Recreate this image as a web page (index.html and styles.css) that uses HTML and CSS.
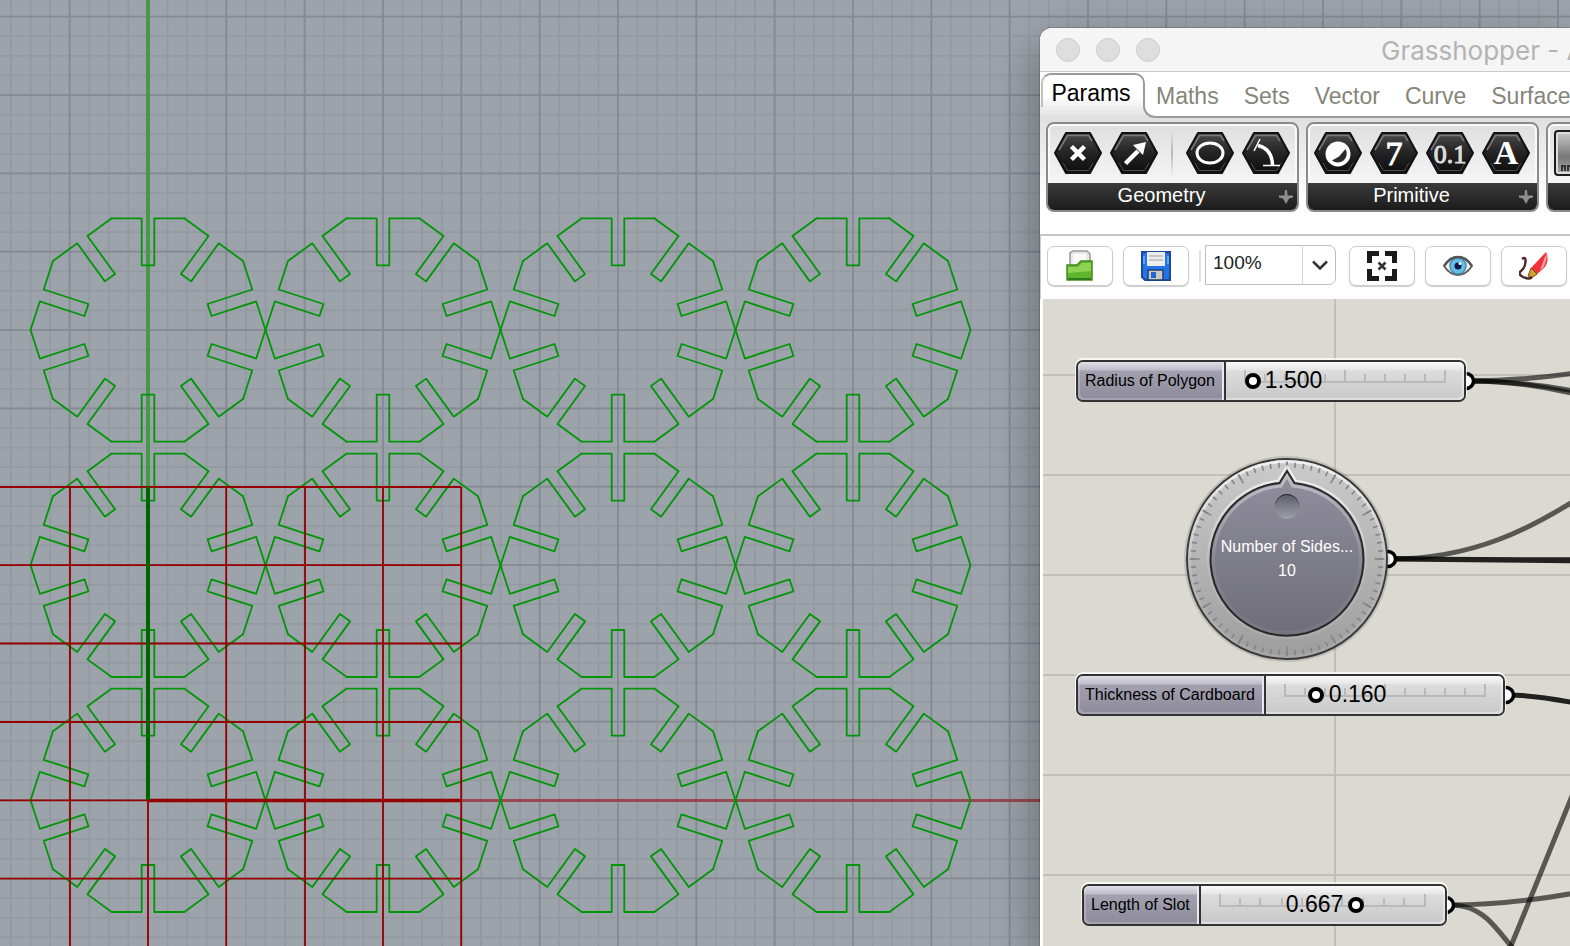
FILE: index.html
```html
<!DOCTYPE html>
<html lang="en">
<head>
<meta charset="utf-8">
<title>Grasshopper</title>
<link rel="stylesheet" href="styles.css">
</head>
<body>
<svg class="viewport" role="img" aria-label="Top viewport with slotted decagons">
  <defs>
    <path id="edge" d="M-36.3-111.7H-6.3V-64.7H6.3V-111.7H36.3"/>
    <g id="gear">
      <use href="#edge"/><use href="#edge" transform="rotate(36)"/><use href="#edge" transform="rotate(72)"/><use href="#edge" transform="rotate(108)"/><use href="#edge" transform="rotate(144)"/><use href="#edge" transform="rotate(180)"/><use href="#edge" transform="rotate(216)"/><use href="#edge" transform="rotate(252)"/><use href="#edge" transform="rotate(288)"/><use href="#edge" transform="rotate(324)"/>
    </g>
    <g id="row"><use href="#gear" x="148"/><use href="#gear" x="383"/><use href="#gear" x="618"/><use href="#gear" x="853"/></g>
  </defs>
  <g fill="none">
    <path d="M-9.55 1500H4000" stroke="#949aa1" stroke-width="3000" stroke-dasharray="1.75 17.833"/>
    <path d="M2000-62.5V3000" stroke="#949aa1" stroke-width="4000" stroke-dasharray="1.75 17.833"/>
    <path d="M-9.55 1500H4000" stroke="#868a94" stroke-width="3000" stroke-dasharray="1.75 76.583"/>
    <path d="M2000-62.5V3000" stroke="#868a94" stroke-width="4000" stroke-dasharray="1.75 76.583"/>
    <path d="M148 0V487" stroke="#4a964b" stroke-width="4"/>
    <path d="M461 800.5H4000" stroke="#964a50" stroke-width="3"/>
    <g class="gears"><use href="#row" y="330"/><use href="#row" y="565.3"/><use href="#row" y="800.3"/></g>
    <g stroke="#960000" stroke-width="1.8">
      <path d="M0 487H461M0 565.2H461M0 643.5H461M0 722H461M0 800.3H461M0 878.7H461"/>
      <path d="M70 487V3000M226.2 487V3000M305 487V3000M383 487V3000M461.2 487V3000M148 800V3000"/>
      <path d="M148 800.5H461" stroke-width="3.6"/>
    </g>
    <path d="M148 487V800" stroke="#006400" stroke-width="4"/>
  </g>
</svg>

<main class="window">
  <header class="titlebar">
    <span class="light"></span><span class="light"></span><span class="light"></span>
    <h1 class="title">Grasshopper - A</h1>
  </header>

  <section class="ribbon">
    <nav class="tabs">
      <button class="tab tab-active">Params</button>
      <div class="tab-rest">
        <button class="tab">Maths</button><button class="tab">Sets</button><button class="tab">Vector</button><button class="tab">Curve</button><button class="tab">Surface</button>
      </div>
    </nav>
    <svg class="defs" aria-hidden="true">
      <defs>
        <linearGradient id="hexfill" x1="0" y1="0" x2="0" y2="1"><stop offset="0" stop-color="#4a4a4a"/><stop offset=".45" stop-color="#262626"/><stop offset="1" stop-color="#0d0d0d"/></linearGradient>
        <g id="hex">
          <path d="M12 1H36L47 21 36 41H12L1 21Z" fill="url(#hexfill)" stroke="#111" stroke-width="2" stroke-linejoin="round"/>
          <path d="M5 18 13.500 3.500H34.500L38 9" fill="none" stroke="#7a7a7a" stroke-width="1.500"/>
          <path d="M9 31 13.500 38.500H34.500L39 31" fill="none" stroke="#4d4d4d"/>
        </g>
        <path id="plus" d="M6 0H8L8.500 5.500H14V7.500L10 8.500 7 14 4 8.500 0 7.500V5.500H5.500Z"/>
      </defs>
    </svg>
    <div class="groups">
      <section class="group">
        <div class="icons">
          <button class="hex" aria-label="Point"><svg width="48" height="42"><use href="#hex"/><path d="M17.500 14.500 30.500 27.500M30.500 14.500 17.500 27.500" stroke="#fff" stroke-width="4.500"/></svg></button>
          <button class="hex" aria-label="Vector"><svg width="48" height="42"><use href="#hex"/><path d="M15.500 31.500 28 19" stroke="#fff" stroke-width="4.500"/><path d="M23 13 36 10 33 23Z" fill="#fff"/></svg></button>
          <span class="rule"></span>
          <button class="hex" aria-label="Circle"><svg width="48" height="42"><use href="#hex"/><ellipse cx="24" cy="21" rx="13" ry="10" fill="none" stroke="#fff" stroke-width="3"/></svg></button>
          <button class="hex" aria-label="Arc"><svg width="48" height="42"><use href="#hex"/><path d="M16 13.500Q30 17 30.500 33" fill="none" stroke="#fff" stroke-width="3.500"/><path d="M12 19 18 7M21 33.500H38" stroke="#fff" stroke-width="1.500"/></svg></button>
        </div>
        <h2 class="caption"><span>Geometry</span><svg width="14" height="14"><use href="#plus"/></svg></h2>
      </section>
      <section class="group">
        <div class="icons">
          <button class="hex" aria-label="Boolean"><svg width="48" height="42"><use href="#hex"/><circle cx="24" cy="22" r="12.500" fill="#fff"/><path d="M31.500 17A9 9 0 0 1 18 28.500L25 24.500Z" fill="#2c2c2c"/></svg></button>
          <button class="hex" aria-label="Integer"><svg width="48" height="42"><use href="#hex"/><text class="glyph glyph-seven" x="24" y="33">7</text></svg></button>
          <button class="hex" aria-label="Number"><svg width="48" height="42"><use href="#hex"/><text class="glyph glyph-number" x="24" y="31">0.1</text></svg></button>
          <button class="hex" aria-label="Text"><svg width="48" height="42"><use href="#hex"/><text class="glyph" x="24" y="32">A</text></svg></button>
        </div>
        <h2 class="caption"><span>Primitive</span><svg width="14" height="14"><use href="#plus"/></svg></h2>
      </section>
      <section class="group">
        <div class="icons"><button class="swatch" aria-label="Slider"><svg width="42" height="42"><path d="M6 39V34H9V39M12 39V34H15V39" fill="none" stroke="#333" stroke-width="2"/></svg></button></div>
        <div class="caption"></div>
      </section>
    </div>
  </section>

  <section class="toolbar">
    <button class="tool" aria-label="Open"><svg width="30" height="32" viewBox="0 0 30 32"><path d="M5 18V3L8 1H22L25 4V18Z" fill="#e8e8e8" stroke="#999" stroke-width="1.500"/><path d="M8 4H21V14H8Z" fill="#fafafa"/><path d="M2 15H12L16 11H27V30H2Z" fill="#61b52c" stroke="#438a20" stroke-width="1.500"/><path d="M3 17H13L17 13H26V21L3 23Z" fill="#8ed153"/><path d="M3 29H26" stroke="#2f7a1c" stroke-width="2"/></svg></button>
    <button class="tool" aria-label="Save"><svg width="32" height="32" viewBox="0 0 32 32"><path d="M2 2H30V30H5L2 27Z" fill="#2474e8" stroke="#194a9b" stroke-width="2"/><path d="M7 2H25V16H7Z" fill="#ececec"/><path d="M9 6H23M9 10H23" stroke="#bbb" stroke-width="1.500"/><path d="M4 6V14M28 6V14" stroke="#58a8ff" stroke-width="2"/><path d="M8 20H23V30H8Z" fill="#ccc9be" stroke="#1c3f78" stroke-width="1.500"/><path d="M11 22H16V28H11Z" fill="#1e66d4"/></svg></button>
    <span class="divider"></span>
    <label class="zoom"><select aria-label="Zoom"><option>100%</option><option>50%</option></select><span class="chevron"><svg width="16" height="10" viewBox="0 0 16 10"><path d="M1 1.500 8 8.500 15 1.500" fill="none" stroke="#333" stroke-width="2.500"/></svg></span></label>
    <button class="tool" aria-label="Zoom extents"><svg width="30" height="30" viewBox="0 0 30 30"><path d="M2.500 12V2.500H12M18 2.500H27.500V12M27.500 18V27.500H18M12 27.500H2.500V18" fill="none" stroke="#1a1a1a" stroke-width="5"/><path d="M11.500 11.500 18.500 18.500M18.500 11.500 11.500 18.500" stroke="#333" stroke-width="2.500"/></svg></button>
    <button class="tool" aria-label="Preview"><svg width="30" height="22" viewBox="0 0 30 22"><path d="M1 11Q7 2 15 2T29 11Q23 20 15 20T1 11Z" fill="#f1f1f1" stroke="#5d5d5d" stroke-width="1.800"/><circle cx="15" cy="11" r="8" fill="#62c0e6" stroke="#4a8aa8" stroke-width="1.500"/><circle cx="15" cy="11" r="3.500" fill="#10154a"/><circle cx="17" cy="8.500" r="1.500" fill="#fff"/><path d="M1 11Q7 2 15 2T29 11" fill="none" stroke="#555" stroke-width="2.500"/></svg></button>
    <button class="tool" aria-label="Sketch"><svg width="30" height="30" viewBox="0 0 30 30"><path d="M3 8Q7 5 6.500 11T2 20 4 26 13 26" fill="none" stroke="#4b2b2e" stroke-width="2.500"/><path d="M12 17 27 1Q31 10 25 17L18 23Z" fill="#f0323a"/><path d="M27 3Q29 8 24 17L21 19Z" fill="#ff9da0"/><path d="M12 17 18 23 14 26 9 25Z" fill="#cfa232" stroke="#6e4b18"/></svg></button>
  </section>

  <section class="canvas">
    <svg class="scene" aria-hidden="true">
      <defs>
        <linearGradient id="rim" x1="0" y1="0" x2="0" y2="1"><stop offset="0" stop-color="#cbcbcb"/><stop offset="1" stop-color="#9d9d9d"/></linearGradient>
        <linearGradient id="face" x1="0" y1="0" x2="0" y2="1"><stop offset="0" stop-color="#918f9d"/><stop offset="1" stop-color="#6e6d79"/></linearGradient>
        <linearGradient id="dimple" x1="0" y1="0" x2="0" y2="1"><stop offset="0" stop-color="#5c5c66"/><stop offset="1" stop-color="#a09fac"/></linearGradient>
        <linearGradient id="dimple-edge" x1="0" y1="0" x2="0" y2="1"><stop offset="0" stop-color="#222"/><stop offset=".5" stop-color="#222" stop-opacity="0"/></linearGradient>
        <linearGradient id="shine" x1="0" y1="0" x2="0" y2="1"><stop offset="0" stop-color="#fff" stop-opacity=".7"/><stop offset=".6" stop-color="#fff" stop-opacity=".1"/></linearGradient>
      </defs>
      <g transform="translate(-1043 -299)" fill="none">
        <path d="M1034 1500H4000" stroke="#c2bfb8" stroke-width="3000" stroke-dasharray="2 298"/>
        <path d="M2500 274V3000" stroke="#c2bfb8" stroke-width="4000" stroke-dasharray="2 98"/>
        <g stroke="#000" stroke-opacity=".6" stroke-width="5">
          <path d="M1470 381Q1530 381 1600 369"/>
          <path d="M1470 381Q1530 381 1600 396"/>
          <path d="M1470 381Q1530 381 1600 400"/>
          <path d="M1390 559C1470 559 1530 532 1600 484"/>
          <path d="M1390 559 1600 560M1390 559 1600 561" stroke-opacity=".85"/>
          <path d="M1508 695Q1540 695 1600 708" stroke-opacity=".85"/>
          <path d="M1450 905Q1520 905 1600 888"/>
          <path d="M1450 905C1480 905 1492 920 1526 966"/>
          <path d="M1594 742 1511 946 1501 975"/>
        </g>
        <g fill="#fff" stroke="#000" stroke-width="3.500"><circle cx="1466" cy="381" r="7.500"/><circle cx="1388" cy="559" r="7.500"/><circle cx="1506" cy="695" r="7.500"/><circle cx="1446" cy="905" r="7.500"/></g>
        <circle cx="1287" cy="559" r="102" stroke="#000" stroke-opacity=".12" stroke-width="2"/>
        <circle cx="1287" cy="559" r="100" fill="url(#rim)" stroke="#3a3a3a" stroke-width="2"/>
        <circle cx="1287" cy="559" r="97.500" stroke="url(#shine)" stroke-width="3"/>
        <circle cx="1287" cy="559" r="94" stroke="#858585" stroke-width="5" pathLength="360" stroke-dasharray="1 4" stroke-dashoffset=".5"/>
        <circle cx="1287" cy="559" r="92.500" stroke="#858585" stroke-width="10" pathLength="360" stroke-dasharray="1 29" stroke-dashoffset=".5"/>
        <path d="M1279.500 483A76.500 76.500 0 1 0 1294.500 483L1287 471Z" stroke="url(#shine)" stroke-width="7"/>
        <path d="M1279.500 483A76.500 76.500 0 1 0 1294.500 483L1287 471Z" fill="url(#face)" stroke="#292929" stroke-width="2"/>
        <path d="M1281 486A73.500 73.500 0 1 0 1293 486L1287 476Z" stroke="url(#shine)" stroke-width="3" opacity=".6"/>
        <circle cx="1287" cy="506.500" r="12.500" fill="url(#dimple)"/>
        <circle cx="1287" cy="506.500" r="12" stroke="url(#dimple-edge)"/>
      </g>
    </svg>

    <div class="dial-text"><span>Number of Sides...</span><output>10</output></div>

    <div class="node node-radius">
      <label class="node-name" for="radius">Radius of Polygon</label>
      <div class="node-body">
        <div class="track">
          <svg width="202" height="14"><path d="M1 0V12H201V0M101 0V12M21 4V12M41 4V12M61 4V12M81 4V12M121 4V12M141 4V12M161 4V12M181 4V12"/></svg>
          <input id="radius" type="range" min="1.1" max="11" step="0.001" value="1.5">
          <output class="value" for="radius">1.500</output>
        </div>
      </div>
    </div>
    <div class="node node-thickness">
      <label class="node-name" for="thickness">Thickness of Cardboard</label>
      <div class="node-body">
        <div class="track">
          <svg width="202" height="14"><path d="M1 0V12H201V0M101 0V12M21 4V12M41 4V12M61 4V12M81 4V12M121 4V12M141 4V12M161 4V12M181 4V12"/></svg>
          <input id="thickness" type="range" min="0" max="1" step="0.001" value="0.16">
          <output class="value" for="thickness">0.160</output>
        </div>
      </div>
    </div>
    <div class="node node-slot">
      <label class="node-name" for="slot">Length of Slot</label>
      <div class="node-body">
        <div class="track">
          <svg width="207" height="14"><path d="M1 0V12H206V0M21 4V12M41 4V12M63 4V12M83 4V12M103 4V12M123 4V12M144 4V12M165 4V12M185 4V12"/></svg>
          <input id="slot" type="range" min="0" max="1" step="0.001" value="0.667">
          <output class="value" for="slot">0.667</output>
        </div>
      </div>
    </div>
  </section>
</main>
</body>
</html>
```
FILE: styles.css
```css
* { box-sizing: border-box; }

body {
  margin: 0;
  height: 100vh;
  position: relative;
  overflow: hidden;
  background: #9da3aa;
  font-family: "Liberation Sans", Arial, sans-serif;
}

button { border: 0; padding: 0; background: none; font: inherit; }
svg { display: block; }

.viewport { position: absolute; inset: 0; width: 100%; height: 100%; }
.gears { stroke: #009608; stroke-width: 1.8; stroke-linejoin: round; stroke-linecap: round; }

/* floating editor window */
.window {
  position: absolute;
  left: 1040px;
  right: 0;
  top: 28px;
  bottom: 0;
  display: flex;
  flex-direction: column;
  overflow: hidden;
  background: #fff;
  border-radius: 12px 0 0 0;
  box-shadow: 0 0 0 1px rgba(0, 0, 0, .15), 0 20px 50px rgba(0, 0, 0, .4);
}

.titlebar {
  display: flex;
  flex: none;
  align-items: center;
  gap: 16px;
  height: 44px;
  padding-left: 16px;
  background: #f5f5f5;
  border-bottom: 1px solid #cbcbcb;
}
.light { flex: none; width: 24px; height: 24px; border: 1px solid #cdcdcd; border-radius: 50%; background: #dedede; }
.title {
  margin: 0 0 0 205px;
  padding-top: 2px;
  font: 400 26px/40px Inter, sans-serif;
  color: #b3b3b3;
  white-space: nowrap;
}

/* ribbon */
.ribbon {
  flex: none;
  height: 164px;
  overflow: hidden;
  border-bottom: 2px solid #c6c6c6;
  background: linear-gradient(#fff 24px, #e0e0e0 46px, #fff 130px);
}
.defs { position: absolute; width: 0; height: 0; }
.tabs { display: flex; height: 46px; }
.tab { font-size: 23px; line-height: 26px; color: #85857a; white-space: nowrap; }
.tab-active {
  flex: none;
  width: 104px;
  height: 34px;
  margin: 1px 0 0 1px;
  padding: 3px 4px 0 0;
  border: 2px solid #9a9a9a;
  border-bottom: 0;
  border-left-color: #c0c0c0;
  border-radius: 10px 10px 0 0;
  color: #000;
}
.tab-rest {
  display: flex;
  flex: 1;
  gap: 25px;
  margin: 20px 0 0 -2px;
  padding-left: 11px;
  border-left: 2px solid #9a9a9a;
  border-bottom: 2px solid #9a9a9a;
  border-bottom-left-radius: 12px;
  background: #fff;
}
.tab-rest .tab { height: 8px; line-height: 8px; }

.groups { display: flex; gap: 7px; padding: 4px 0 0 6px; }
.group {
  flex: none;
  border: 2px solid #8a8a8a;
  border-radius: 8px;
  overflow: hidden;
  background: linear-gradient(#dfdfdf, #f6f6f6 60px);
}
.icons {
  display: flex;
  align-items: center;
  gap: 8px;
  height: 59px;
  padding: 0 5px 4px 4px;
  border: 2px solid #fafafa;
  border-bottom: 0;
  border-radius: 6px 6px 0 0;
}
.hex { width: 48px; height: 42px; }
.rule { width: 2px; height: 48px; margin: 0 5px; background: linear-gradient(#e5e5e5, #b5b5b5, #f3f3f3); }
.swatch {
  width: 46px;
  height: 46px;
  border: 2px solid #1c1c1c;
  border-radius: 4px;
  background: linear-gradient(#c9c9c9, #777 60%, #aaa);
  box-shadow: inset 0 0 0 2px #ddd;
}
.caption {
  display: flex;
  align-items: center;
  height: 27px;
  margin: 0;
  padding: 0 4px;
  background: linear-gradient(#3a3a3a, #1c1c1c);
  color: #fff;
  font-size: 20px;
  font-weight: 400;
}
.caption span { flex: 1; padding-right: 8px; line-height: 22px; height: 26px; text-align: center; }
.caption svg { fill: #8f8f8f; }
.glyph { font: 700 34px "Liberation Serif", serif; fill: #fff; text-anchor: middle; }
.glyph-seven { font-weight: 400; stroke: #fff; stroke-width: 1; }
.glyph-number { font-size: 26px; font-weight: 400; stroke: #ddd; stroke-width: 1; fill: #ddd; }

/* toolbar */
.toolbar {
  display: flex;
  flex: none;
  align-items: center;
  gap: 10px;
  height: 63px;
  padding: 0 0 3px 7px;
  border-left: 1px solid #ccc;
}
.tool {
  display: flex;
  flex: none;
  align-items: center;
  justify-content: center;
  width: 66px;
  height: 40px;
  border: 1px solid #cdcdcd;
  border-radius: 7px;
  background: #fff;
  box-shadow: 0 1px 1px rgba(0, 0, 0, .2);
  margin-left: -1px;
}
.tool + .tool { margin-left: 0; }
.divider { flex: none; width: 2px; height: 32px; background: #e0e0e0; }
.zoom { display: flex; flex: none; position: relative; width: 131px; height: 40px; margin: -2px 4px 0 -6px; }
.zoom select {
  appearance: none;
  width: 100%;
  height: 40px;
  padding: 0 0 6px 7px;
  border: 1px solid #bdbdbd;
  border-radius: 0 7px 7px 0;
  background: #fff;
  font: 19px "Liberation Sans", Arial, sans-serif;
  color: #222;
}
.chevron {
  position: absolute;
  right: 0;
  top: 0;
  display: flex;
  align-items: center;
  justify-content: center;
  width: 34px;
  height: 40px;
  border-left: 1px solid #d3d3d3;
  pointer-events: none;
}

/* node canvas */
.canvas { position: relative; flex: 1; min-height: 0; margin-left: 3px; background: #dcd9d2; overflow: hidden; }
.scene { position: absolute; inset: 0; width: 100%; height: 100%; }

.dial-text {
  position: absolute;
  left: 168px;
  top: 236px;
  width: 152px;
  text-align: center;
  color: #fff;
  font-size: 16px;
  line-height: 24px;
  white-space: nowrap;
}
.dial-text output { display: block; }

.node {
  position: absolute;
  display: flex;
  height: 42px;
  border: 2px solid #333;
  border-radius: 7px;
  background: #ccc;
  box-shadow: 0 -1px 0 1px rgba(255, 255, 255, .75);
}
.node-radius { left: 33px; top: 61px; width: 390px; }
.node-thickness { left: 33px; top: 375px; width: 429px; }
.node-slot { left: 39px; top: 585px; width: 365px; }
.node-name {
  flex: none;
  padding: 0 7px;
  border-right: 2px solid #e8e8ee;
  border-radius: 5px 0 0 5px;
  background: linear-gradient(#e0dfe6, #bfbdc9 8px, #a3a1b0 9px, #8d8b99);
  box-shadow: inset 2px -2px 0 rgba(255, 255, 255, .2);
  font-size: 16px;
  line-height: 37px;
  white-space: nowrap;
}
.node-body {
  flex: 1;
  border-left: 2px solid #333;
  border-radius: 0 5px 5px 0;
  background: linear-gradient(#fafafa, #e6e6e6 8px, #dcdcdc 9px, #c8c8c8);
  box-shadow: inset -2px -2px 0 rgba(255, 255, 255, .4);
}
.track { position: relative; height: 38px; margin: 0 13px 0 11px; }
.track svg { position: absolute; left: 7px; top: 8px; fill: none; stroke: #b9b9b9; stroke-width: 2; }
.track input {
  appearance: none;
  position: absolute;
  left: 0;
  top: 11px;
  width: 100%;
  height: 16px;
  margin: 0;
  background: none;
}
.track input::-webkit-slider-thumb {
  appearance: none;
  width: 16px;
  height: 16px;
  border: 4px solid #000;
  border-radius: 50%;
  background: #fff;
}
.value { position: absolute; top: 0; font-size: 23px; line-height: 37px; pointer-events: none; }
.node-radius .value { left: 28px; }
.node-thickness .value { left: 52px; }
.node-slot .value { left: 74px; }
```
